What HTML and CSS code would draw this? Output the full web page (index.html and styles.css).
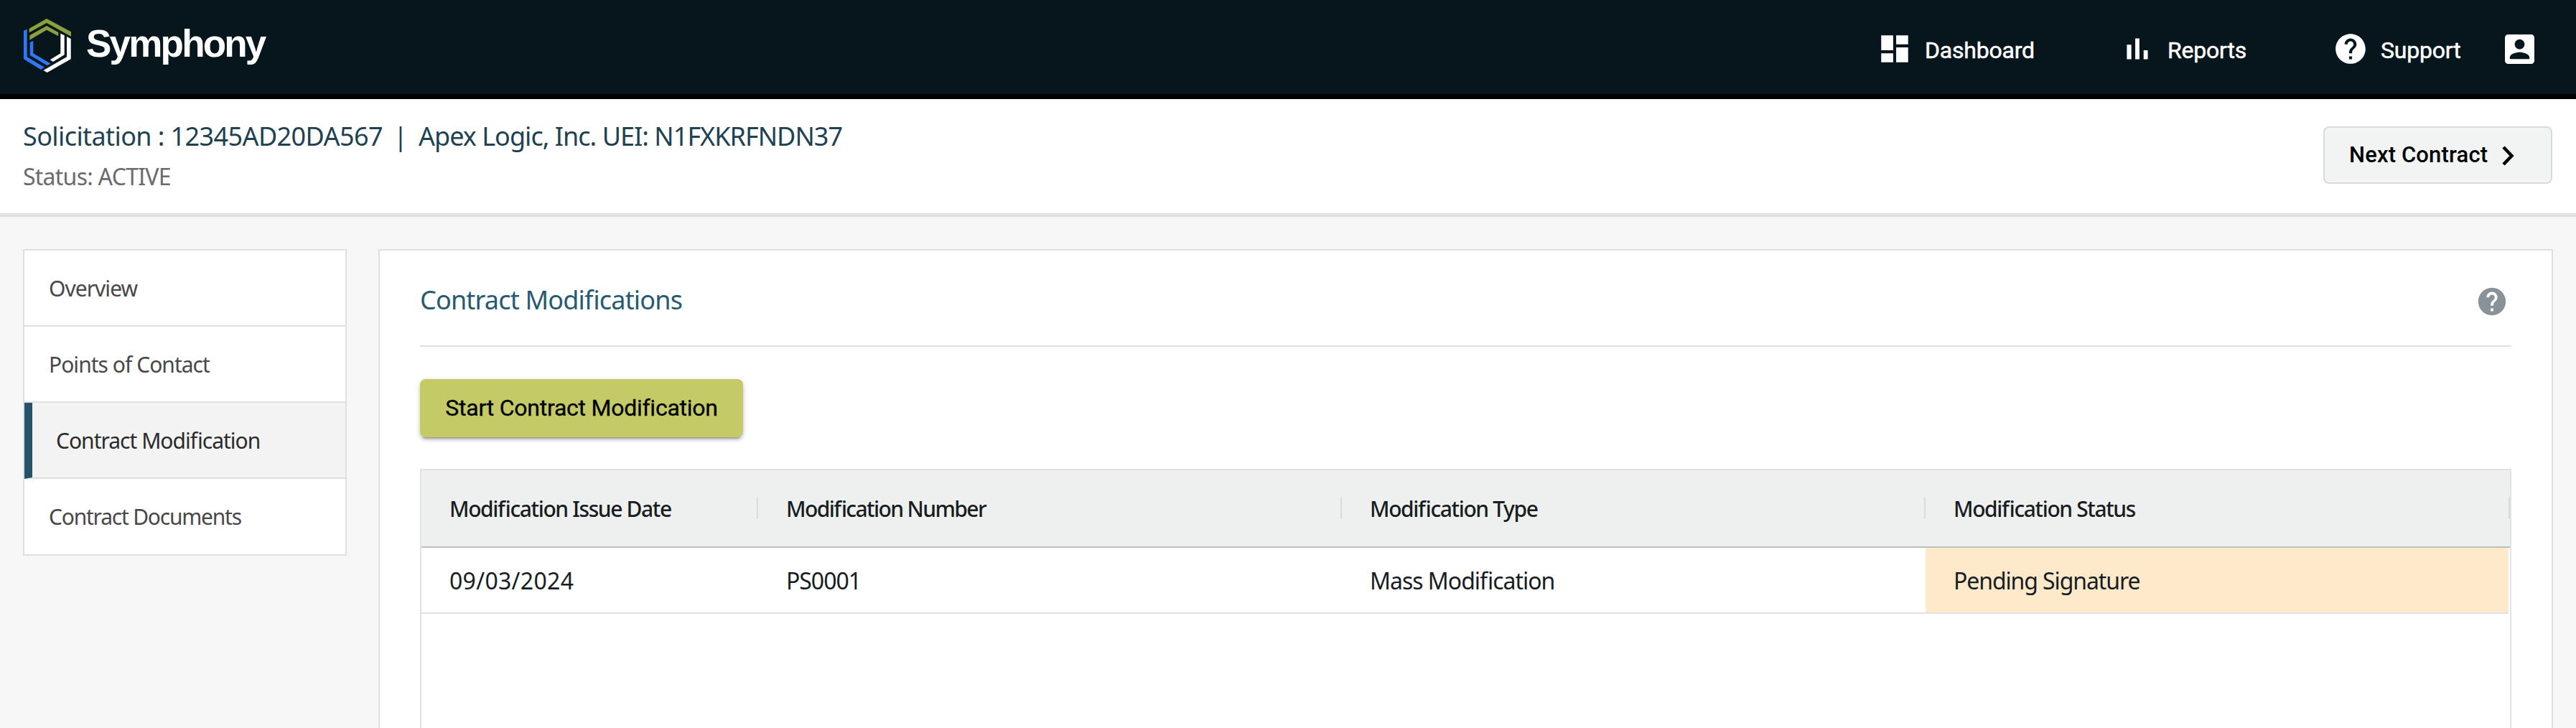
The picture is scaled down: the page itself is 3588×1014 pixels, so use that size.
FILE: index.html
```html
<!DOCTYPE html>
<html lang="en">
<head>
<meta charset="utf-8">
<title>Symphony - Contract Modifications</title>
<link rel="stylesheet" href="styles.css">
</head>
<body>
<header class="topbar">
  <div class="brand">
    <svg class="brand-mark" viewBox="0 0 68 77">
      <path fill="#8a9f3e" d="M33 1L67 19.300V25.700L33 7L8.700 20.300V14.700ZM33 11L49.300 20V25.300L33 16.700L9.300 30.700V24.300Z"/>
      <path fill="#2f78f5" d="M1 17.700L5.700 15.700V54.300L30 68.700L25 72L1 57.300ZM9.700 34L14.300 32V49.300L38.700 63.700L33.700 66.300L9.700 52Z"/>
      <path fill="#fff" d="M52.300 21.700L57.700 24.300V51.300L42 61L37.700 58.300L52.300 49.300ZM61 26L66.700 29V57.300L33.700 76L28.300 73L61 54.300Z"/>
    </svg>
    <span class="brand-name">Symphony</span>
  </div>
  <nav class="topnav">
    <a class="nav-item nav-dashboard"><svg class="icon" viewBox="0 0 24 24"><path d="M3 13h8V3H3v10zm0 8h8v-6H3v6zm10 0h8V11h-8v10zm0-18v6h8V3h-8z"/></svg><span>Dashboard</span></a>
    <a class="nav-item nav-reports"><svg class="icon" viewBox="0 0 24 24"><path d="M5 9.200h3V19H5V9.200zM10.600 5h2.800v14h-2.800V5zm5.600 8H19v6h-2.800v-6z"/></svg><span>Reports</span></a>
    <a class="nav-item nav-support"><svg class="icon" viewBox="0 0 24 24"><path d="M12 2C6.480 2 2 6.480 2 12s4.480 10 10 10 10-4.480 10-10S17.520 2 12 2zm1 17h-2v-2h2v2zm2.070-7.750l-.9.920C13.450 12.900 13 13.500 13 15h-2v-.5c0-1.100.45-2.100 1.170-2.830l1.240-1.260c.37-.36.590-.86.590-1.410 0-1.100-.9-2-2-2s-2 .9-2 2H8c0-2.210 1.790-4 4-4s4 1.790 4 4c0 .88-.36 1.680-.93 2.250z"/></svg><span>Support</span></a>
    <a class="nav-item nav-account"><svg class="icon" viewBox="3 3 18 18"><path d="M3 5v14a2 2 0 0 0 2 2h14c1.100 0 2-.9 2-2V5c0-1.100-.9-2-2-2H5a2 2 0 0 0-2 2zm12 4c0 1.660-1.340 3-3 3s-3-1.340-3-3 1.340-3 3-3 3 1.340 3 3zm-9 8c0-2 4-3.100 6-3.100s6 1.100 6 3.100v1H6v-1z"/></svg></a>
  </nav>
</header>
<section class="subheader">
  <div class="contract">
    <h1 class="contract-title"><span class="sol">Solicitation : 12345AD20DA567</span><span class="bar">|</span><span class="org">Apex Logic, Inc. UEI: N1FXKRFNDN37</span></h1>
    <div class="contract-status"><span class="status-text">Status: ACTIVE</span></div>
  </div>
  <button class="next-button"><span>Next Contract</span><svg class="chevron" viewBox="0 0 17 28"><path d="M2 2l11.500 12L2 26" fill="none" stroke="#000" stroke-width="4.600"/></svg></button>
</section>
<main class="content">
  <nav class="sidebar">
    <a class="side-item"><span>Overview</span></a>
    <a class="side-item"><span>Points of Contact</span></a>
    <a class="side-item side-active"><span>Contract Modification</span></a>
    <a class="side-item side-documents"><span>Contract Documents</span></a>
  </nav>
  <section class="panel">
    <div class="panel-head">
      <h2 class="panel-title"><span>Contract Modifications</span></h2>
      <svg class="help" viewBox="0 0 24 24"><path d="M12 2C6.480 2 2 6.480 2 12s4.480 10 10 10 10-4.480 10-10S17.520 2 12 2zm1 17h-2v-2h2v2zm2.070-7.750l-.9.920C13.450 12.900 13 13.500 13 15h-2v-.5c0-1.100.45-2.100 1.170-2.830l1.240-1.260c.37-.36.590-.86.590-1.410 0-1.100-.9-2-2-2s-2 .9-2 2H8c0-2.210 1.790-4 4-4s4 1.790 4 4c0 .88-.36 1.680-.93 2.250z"/></svg>
    </div>
    <button class="start-button"><span>Start Contract Modification</span></button>
    <div class="grid">
      <div class="grid-row grid-head">
        <div class="cell"><span>Modification Issue Date</span></div>
        <div class="cell cell-number"><span>Modification Number</span></div>
        <div class="cell"><span>Modification Type</span></div>
        <div class="cell"><span>Modification Status</span></div>
      </div>
      <div class="grid-row grid-body">
        <div class="cell cell-date"><span>09/03/2024</span></div>
        <div class="cell"><span>PS0001</span></div>
        <div class="cell"><span>Mass Modification</span></div>
        <div class="cell cell-pending"><span>Pending Signature</span></div>
      </div>
    </div>
  </section>
</main>
</body>
</html>
```

FILE: styles.css
```css
* { box-sizing: border-box; }
body {
  margin: 0;
  height: 1014px;
  overflow: hidden;
  display: flex;
  flex-direction: column;
  background: #f7f7f7;
  font-family: "Noto Sans", "Open Sans", sans-serif;
  font-feature-settings: "liga" 1;
  color: #181d1f;
}
h1, h2 { margin: 0; font-weight: 400; }
button { font-family: Roboto, sans-serif; color: #000; }

.topbar {
  flex: none;
  height: 138px;
  display: flex;
  justify-content: space-between;
  background: #06161c;
  border-bottom: 7px solid #000;
}
.brand { display: flex; align-items: flex-start; padding: 25px 0 0 32px; }
.brand-mark { width: 68px; height: 77px; }
.brand-name {
  margin: 6px 0 0 20px;
  font: 700 53px/60px "Liberation Sans", sans-serif;
  letter-spacing: -2.8px;
  color: #fff;
}
.topnav { display: flex; align-items: flex-start; padding: 43px 58px 0 0; color: #fff; }
.nav-item {
  display: flex;
  align-items: center;
  height: 50px;
  font: 400 32px/50px Roboto, sans-serif;
  letter-spacing: -.2px;
}
.icon { width: 50px; height: 50px; fill: #fff; flex: none; }
.nav-item span { margin: 3px 0 0 17px; white-space: nowrap; -webkit-text-stroke: .5px #fff; }
.nav-dashboard { width: 338px; }
.nav-reports { width: 297px; }
.nav-support { width: 240px; }
.nav-account .icon { width: 41px; height: 41px; }

.subheader {
  flex: none;
  height: 164px;
  display: flex;
  justify-content: space-between;
  align-items: flex-start;
  padding: 27px 33px 0 32px;
  background: #fff;
  border-bottom: 5px solid #e1e1e1;
}
.contract-title { display: flex; font-size: 36px; line-height: 50px; color: #1f4251; }
.contract-title span { white-space: pre; }
.sol { letter-spacing: -.6px; }
.bar { width: 50px; text-align: center; }
.org { letter-spacing: -.97px; }
.contract-status { margin-top: 9px; font-size: 32px; line-height: 44px; letter-spacing: -.75px; color: #6b6b6b; }
.next-button {
  width: 319px;
  height: 80px;
  display: flex;
  align-items: center;
  margin-top: 11px;
  padding: 0 0 2px 34px;
  background: #f2f4f4;
  border: 2px solid #d8dbdb;
  border-radius: 8px;
  font-size: 31px;
  font-weight: 500;
  letter-spacing: .15px;
}
.chevron { width: 17px; height: 28px; margin: 4px 0 0 20px; }

.content { flex: 1; display: flex; align-items: flex-start; gap: 44px; padding: 45px 32px 0 32px; }
.sidebar { width: 451px; background: #fff; border: 2px solid #e0e0e0; flex: none; }
.side-item {
  display: flex;
  align-items: center;
  height: 106px;
  padding-left: 34px;
  border-bottom: 2px solid #e0e0e0;
  font-size: 30px;
  letter-spacing: -.97px;
  color: #484848;
}
.side-item:last-child { height: 105px; border-bottom: 0; }
.side-active { border-left: 11px solid #26536a; padding-left: 33px; letter-spacing: -1px; background: #f3f3f3; color: #2b2b2b; }
.side-documents { letter-spacing: -1.22px; }

.panel {
  flex: 1;
  height: 700px;
  padding: 0 56px;
  background: #fff;
  border: 2px solid #e0e0e0;
}
.panel-head {
  height: 134px;
  display: flex;
  justify-content: space-between;
  align-items: center;
  border-bottom: 2px solid #e0e0e0;
}
.panel-title { margin-top: 6px; font-size: 36px; line-height: 50px; letter-spacing: -.82px; color: #265a70; }
.help { width: 46px; height: 46px; margin: 9px 4px 0 0; fill: #8a9299; }
.start-button {
  display: block;
  width: 450px;
  height: 81px;
  margin-top: 45px;
  padding: 0 0 2px;
  background: #c3ca66;
  border: 0;
  border-radius: 8px;
  box-shadow: 0 6px 2px -4px rgba(0,0,0,.2), 0 4px 4px rgba(0,0,0,.14), 0 2px 10px rgba(0,0,0,.12);
  font-size: 32px;
  font-weight: 400;
  letter-spacing: -.25px;
  -webkit-text-stroke: .3px #000;
}
.grid { margin-top: 44px; height: 400px; border: 2px solid #e0e2e2; }
.grid-row { display: grid; grid-template-columns: 469px 813px 813px 1fr; }
.cell { display: flex; align-items: center; padding-left: 39px; white-space: nowrap; }
.grid-head {
  height: 108px;
  background: #eef0ef;
  border-bottom: 2px solid #babfc7;
  font-size: 30px;
  font-weight: 500;
  letter-spacing: -1.38px;
}
.grid-head .cell { background: linear-gradient(#d9dcdc, #d9dcdc) right 37px / 2px 31px no-repeat; }
.grid-head .cell-number { letter-spacing: -1.6px; }
.grid-body {
  height: 92px;
  margin-right: 2px;
  border-bottom: 2px solid #dfe0e8;
  font-size: 32px;
  letter-spacing: -1.03px;
}
.grid-body .cell { padding-top: 1px; }
.grid-body .cell-date { letter-spacing: .3px; }
.grid-body .cell-pending { background: #ffe9cb; letter-spacing: -1.1px; }
```
